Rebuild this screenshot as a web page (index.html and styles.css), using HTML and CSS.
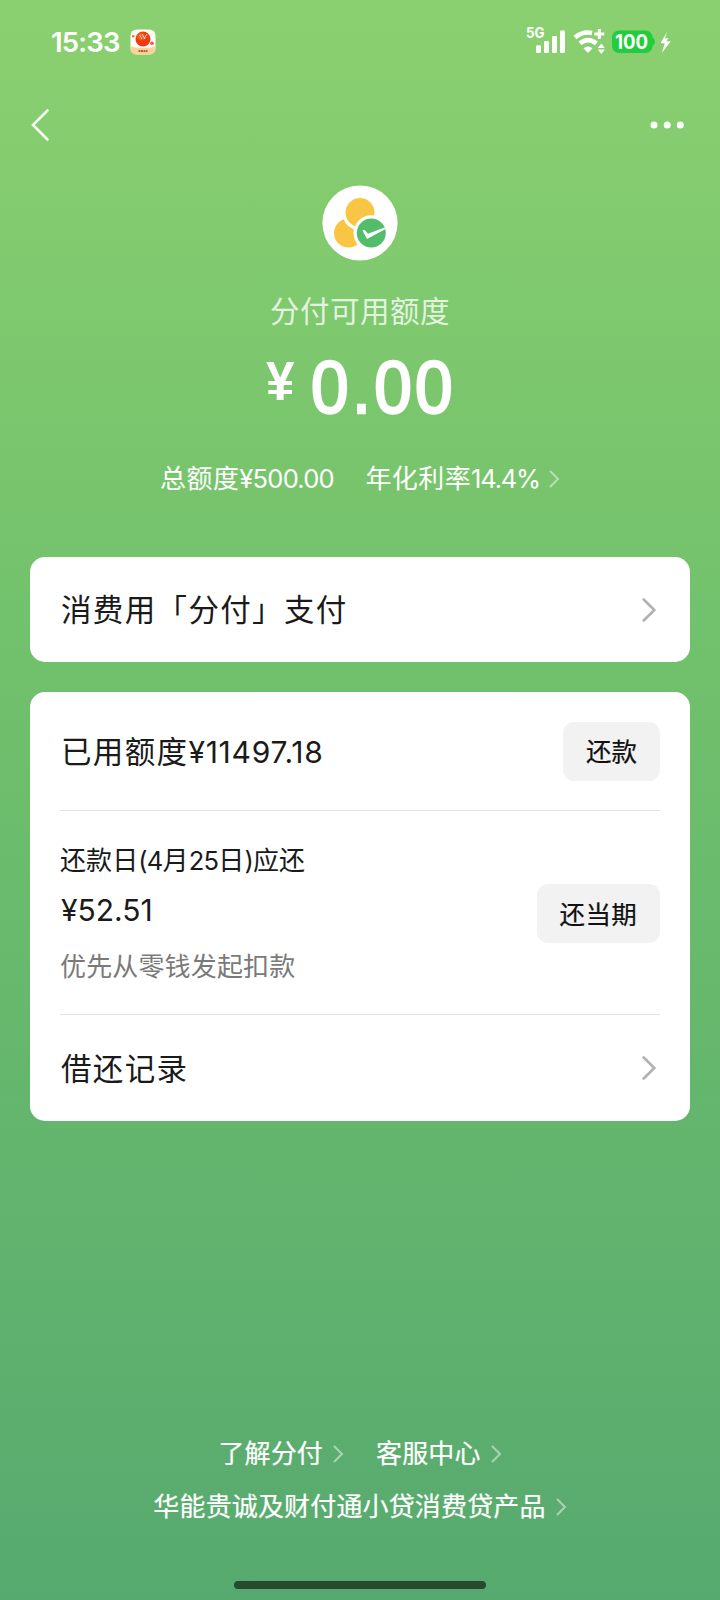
FILE: index.html
```html
<!DOCTYPE html>
<html lang="zh-CN">
<head>
<meta charset="utf-8">
<title>分付</title>
<link rel="stylesheet" href="styles.css">
</head>
<body>
<div class="screen">
  <header class="status">
    <span class="time">15:33</span>
    <svg class="app" width="26" height="26" viewBox="0 0 26 26">
      <defs><clipPath id="tile"><rect x="0.5" y="0.5" width="25" height="25" rx="6"/></clipPath></defs>
      <g clip-path="url(#tile)">
        <rect width="26" height="26" fill="#fffdf6"/>
        <path d="M0 17C5 19.500 21 19.500 26 17V26H0Z" fill="#fbd09a"/>
      </g>
      <circle cx="13" cy="10" r="7.500" fill="#f23a10"/>
      <circle cx="11" cy="7.500" r="3.800" fill="#ff6a1c" opacity=".6"/>
      <path d="M9.500 6l2.500 4M12 5l3 5M17 5l-3 5" stroke="#ffe9d0" stroke-width=".9" fill="none"/>
      <circle cx="3.200" cy="7.200" r="1.200" fill="#f0604a"/>
      <circle cx="22" cy="14.200" r="1.800" fill="#e9564a"/>
      <path d="M8.500 22h9" stroke="#b5622c" stroke-width="2.200" stroke-dasharray="2 .5"/>
    </svg>
    <svg class="signals" width="150" height="44" viewBox="522 20 150 44">
      <g fill="#fff">
        <rect x="536" y="45.300" width="5" height="7.700" rx="1.200"/>
        <rect x="544" y="41" width="5" height="12" rx="1.200"/>
        <rect x="552" y="36" width="5" height="17" rx="1.200"/>
        <rect x="560" y="30.500" width="5" height="22.500" rx="1.200"/>
        <path d="M583.500 48.300Q588 44.600 592.500 48.300L588.800 52.300Q588 53 587.200 52.300Z"/>
        <path d="M601.300 43.500l3.500 4.500h-7zM601.300 54l3.500-4.500h-7z"/>
        <path d="M667 32l-6.500 11.200h4.300L661.800 53l9-11.800h-4.600l2.300-3h-3.500z"/>
      </g>
      <path d="M575 37.500Q582.500 31 592 33" fill="none" stroke="#fff" stroke-width="4.600"/>
      <path d="M580 43.300Q588 36.800 596.500 43.300" fill="none" stroke="#fff" stroke-width="4.600"/>
      <path d="M599.300 29v10M594.300 34h10" stroke="#fff" stroke-width="3"/>
      <rect x="612" y="30.500" width="40.500" height="22.500" rx="7" fill="#20cd3c"/>
      <path d="M652 37.500q2.800 1 2.800 4.200t-2.800 4.200z" fill="#20cd3c"/>
      <text class="net" x="526" y="38.300" textLength="18.500" lengthAdjust="spacingAndGlyphs">5G</text>
      <text class="battery" x="615" y="48.800" textLength="33" lengthAdjust="spacingAndGlyphs">100</text>
    </svg>
  </header>

  <nav class="nav">
    <svg width="20" height="34" viewBox="0 0 20 34"><path d="M16.500 2.500L2 17l14.500 14.500" fill="none" stroke="#fff" stroke-width="2.600" stroke-linecap="round" opacity=".92"/></svg>
    <svg width="34" height="8" viewBox="0 0 34 8" fill="#fff"><circle cx="4" cy="4" r="3.500"/><circle cx="17.200" cy="4" r="3.500"/><circle cx="30.300" cy="4" r="3.500"/></svg>
  </nav>

  <section class="hero">
    <svg class="logo" width="76" height="76" viewBox="0 0 76 76">
      <circle cx="38" cy="38" r="37.600" fill="#fff"/>
      <circle cx="26.500" cy="48" r="14.500" fill="#f8c642"/>
      <circle cx="38" cy="28" r="17.500" fill="#fff"/>
      <circle cx="38" cy="27.500" r="14.500" fill="#f8c642"/>
      <circle cx="49.300" cy="48" r="17.800" fill="#fff"/>
      <circle cx="49.300" cy="48" r="14.500" fill="#53bd6c"/>
      <path d="M40.500 45.500l1.800-.7 3.700 4L62.500 42.500l.6 1.800L45 54z" fill="#fff"/>
    </svg>
    <div class="label">分付可用额度</div>
    <div class="amount"><span class="yen">¥</span><span class="value">0.00</span></div>
    <div class="terms">
      <span>总额度<span class="num">¥500.00</span></span>
      <span class="rate">年化利率<span class="num tight">14.4%</span></span>
      <svg class="mini" width="11" height="18" viewBox="0 0 11 18"><path d="M1.500 1.500L9 9l-7.500 7.500"/></svg>
    </div>
  </section>

  <section class="card pay">
    <span class="title">消费用「分付」支付</span>
    <svg class="chev" width="15" height="26" viewBox="0 0 15 26"><path d="M1.700 2.500L12.300 13 1.700 23.500"/></svg>
  </section>

  <section class="card detail">
    <div class="row used">
      <span class="title">已用额度<span class="used-num">¥11497.18</span></span>
      <button class="btn">还款</button>
    </div>
    <div class="row due">
      <div class="due-text">
        <div class="day">还款日<span class="num">(4</span>月<span class="num">25</span>日<span class="num">)</span>应还</div>
        <div class="sum">¥52.51</div>
        <div class="hint">优先从零钱发起扣款</div>
      </div>
      <button class="btn">还当期</button>
    </div>
    <div class="row records">
      <span class="title">借还记录</span>
      <svg class="chev" width="15" height="26" viewBox="0 0 15 26"><path d="M1.700 2.500L12.300 13 1.700 23.500"/></svg>
    </div>
  </section>

  <footer class="footer">
    <div class="links">
      <span class="link">了解分付<svg class="mini" width="11" height="18" viewBox="0 0 11 18"><path d="M1.500 1.500L9 9l-7.500 7.500"/></svg></span>
      <span class="link">客服中心<svg class="mini" width="11" height="18" viewBox="0 0 11 18"><path d="M1.500 1.500L9 9l-7.500 7.500"/></svg></span>
    </div>
    <div class="links">
      <span class="link">华能贵诚及财付通小贷消费贷产品<svg class="mini" width="11" height="18" viewBox="0 0 11 18"><path d="M1.500 1.500L9 9l-7.500 7.500"/></svg></span>
    </div>
    <div class="home"></div>
  </footer>
</div>
</body>
</html>
```
FILE: styles.css
```css
* { box-sizing: border-box; }
body { margin: 0; }
.screen {
  width: 720px;
  height: 1600px;
  display: flex;
  flex-direction: column;
  overflow: hidden;
  background: linear-gradient(#8bd070 0%, #70c06c 42%, #57aa6f 100%);
  font-family: Inter, "Noto Sans CJK SC", sans-serif;
  color: #1a1a1a;
  white-space: nowrap;
}
.status {
  height: 84px;
  padding: 0 48px 0 51px;
  display: flex;
  align-items: center;
  color: #fff;
}
.time { font-size: 27.5px; font-weight: 600; line-height: 84px; width: 79px; letter-spacing: -.8px; }
.signals { margin-left: auto; }
.net { font: 700 14.5px Inter, sans-serif; fill: #fff; }
.battery { font: 700 20px Inter, sans-serif; fill: #fff; }
.nav {
  height: 82px;
  padding: 0 36px 0 31px;
  display: flex;
  align-items: center;
  justify-content: space-between;
}
.hero {
  height: 391px;
  padding-top: 19px;
  display: flex;
  flex-direction: column;
  align-items: center;
  color: #fff;
}
.logo { flex: none; }
.label { margin-top: 29.500px; font-size: 29.500px; letter-spacing: .5px; line-height: 40px; color: rgba(255, 255, 255, .8); }
.amount {
  margin-top: 16px;
  height: 80px;
  padding-left: 7px;
  display: flex;
  align-items: flex-start;
  font-family: "Liberation Sans", sans-serif;
}
.yen { width: 28px; margin: 4px 16.500px 0 0; font-size: 55px; font-weight: 700; line-height: 60px; transform: scaleX(.93); transform-origin: left; }
.value { width: 150.500px; font-size: 75px; line-height: 81px; -webkit-text-stroke: 2.600px #fff; letter-spacing: 3.800px; transform: scaleX(.9); transform-origin: left; }
.terms { margin-top: 34.500px; display: flex; align-items: center; font-size: 26px; letter-spacing: .4px; line-height: 36px; }
.rate { margin-left: 31.500px; }
.mini { margin-left: 10px; flex: none; }
.terms .mini { margin-left: 9px; }
.mini path { fill: none; stroke: rgba(255, 255, 255, .48); stroke-width: 2px; stroke-linecap: round; }
.num { font-size: 25.500px; letter-spacing: -.75px; }
.num.tight { letter-spacing: -1.200px; }
.card { margin: 0 30px; background: #fff; border-radius: 15px; flex: none; }
.pay { height: 105px; padding: 0 33px 0 31px; display: flex; align-items: center; justify-content: space-between; }
.title { font-size: 30.500px; letter-spacing: 1.350px; padding-bottom: 3px; }
.chev path { fill: none; stroke: #b2b2b2; stroke-width: 2.600px; stroke-linecap: round; }
.detail { margin-top: 30px; height: 429px; padding: 0 30px; }
.row { display: flex; align-items: center; justify-content: space-between; }
.row .title { padding-left: 1px; }
.used { height: 119px; border-bottom: 1px solid #e4e4e4; }
.used-num { font-size: 30px; letter-spacing: .75px; }
.btn {
  height: 59px;
  padding: 0 23px 3px;
  border: 0;
  border-radius: 11px;
  background: #f2f2f2;
  color: #111;
  font: 400 25.500px "Noto Sans CJK SC", sans-serif;
  -webkit-text-stroke: .2px #111;
}
.due { height: 204px; border-bottom: 1px solid #e4e4e4; }
.due .btn { margin-top: 2px; letter-spacing: .3px; }
.due-text { padding: 2px 0 0; }
.day { font-size: 26px; line-height: 40px; letter-spacing: .1px; }
.sum { font-size: 30px; line-height: 40px; margin-top: 9px; padding-left: 1px; }
.hint { font-size: 26px; line-height: 40px; margin-top: 17px; color: #7a7a7a; letter-spacing: .15px; }
.records { height: 106px; padding-right: 3px; }
.footer { margin-top: auto; height: 166px; display: flex; flex-direction: column; align-items: center; color: #fff; }
.links { display: flex; gap: 32px; height: 52.500px; }
.link { display: flex; align-items: center; font-size: 26px; letter-spacing: .15px; line-height: 40px; height: 40px; -webkit-text-stroke: .2px #fff; }
.home { width: 252px; height: 8px; border-radius: 4px; background: #29492f; margin-top: 42px; }
```
